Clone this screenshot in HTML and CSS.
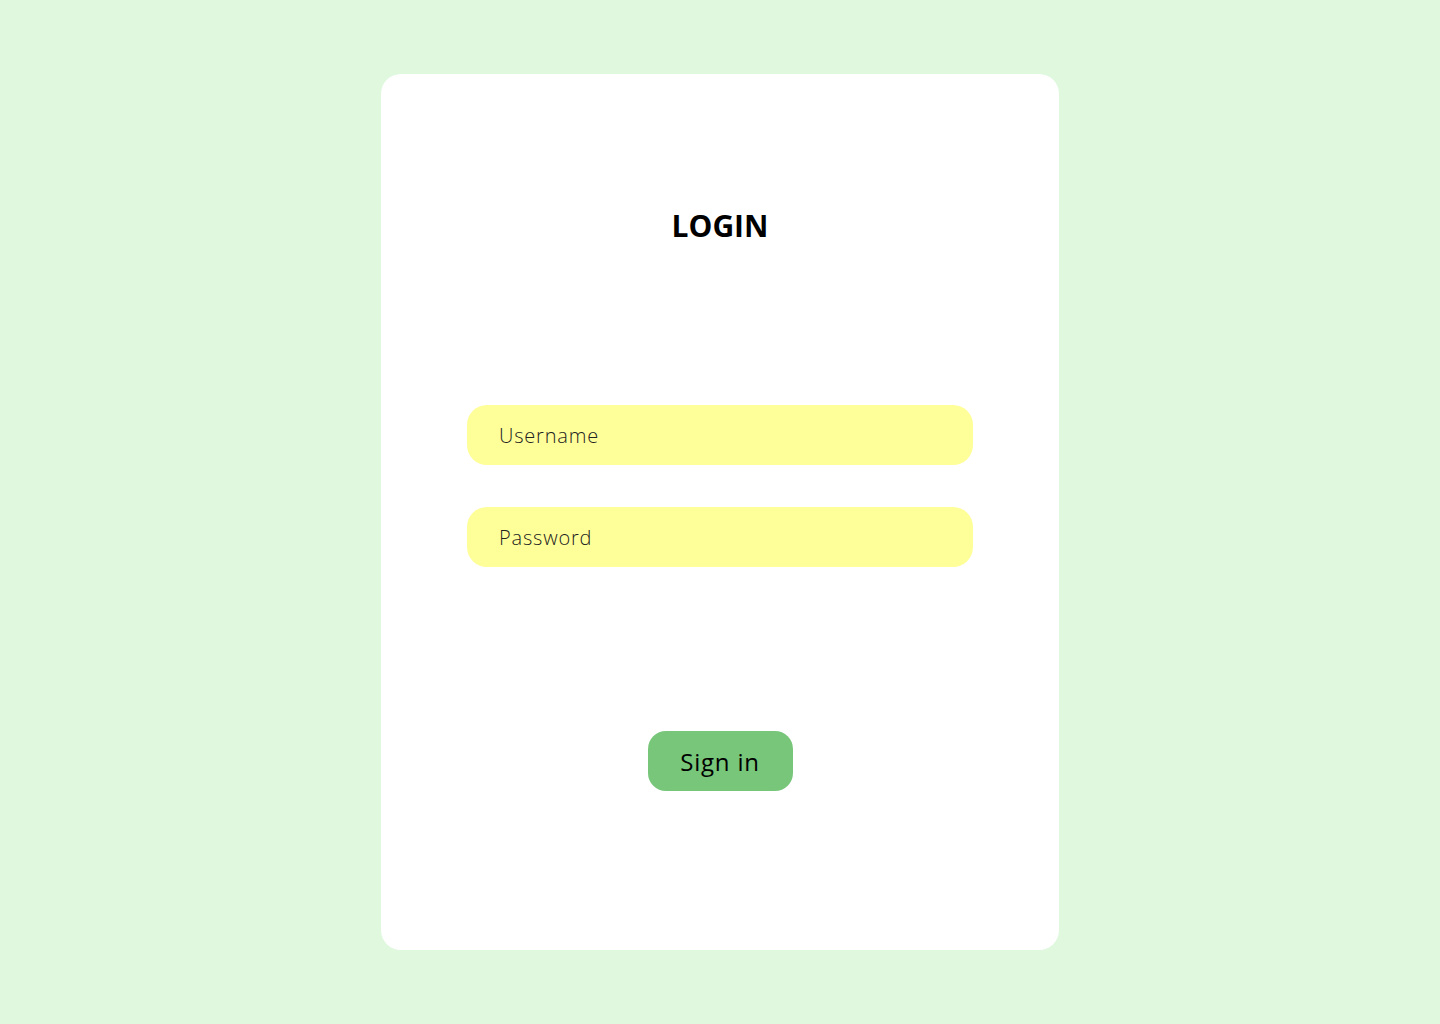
FILE: index.html
```html
<!DOCTYPE html>
<html lang="en">
<head>
<meta charset="utf-8">
<title>Login</title>
<link rel="stylesheet" href="styles.css">
</head>
<body>
<main class="page">
  <form class="card">
    <h1 class="title">LOGIN</h1>
    <div class="fields">
      <input class="field" type="text" placeholder="Username">
      <input class="field" type="password" placeholder="Password">
    </div>
    <button class="btn" type="button">Sign in</button>
  </form>
</main>
</body>
</html>
```
FILE: styles.css
```css
* { box-sizing: border-box; }
html, body { margin: 0; padding: 0; }
body {
  background: #dff8de;
  font-family: "Open Sans", "Noto Sans", sans-serif;
  color: #000;
}
.page {
  height: 1024px;
  display: flex;
  align-items: center;
  justify-content: center;
}
.card {
  width: 678px;
  height: 876px;
  background: #fff;
  border-radius: 20px;
  display: flex;
  flex-direction: column;
  align-items: center;
  padding-top: 130px;
}
.title {
  margin: 0;
  font-size: 30px;
  line-height: 44px;
  font-weight: 700;
  letter-spacing: 0;
}
.fields {
  margin-top: 157px;
  display: flex;
  flex-direction: column;
  gap: 42px;
}
.field {
  width: 506px;
  height: 60px;
  border: none;
  outline: none;
  border-radius: 20px;
  background: #ffff99;
  padding: 0 32px;
  font-family: inherit;
  font-size: 20px;
  font-weight: 300;
  letter-spacing: 0.8px;
  color: #222;
}
.field::placeholder { color: #222; opacity: 1; }
.btn {
  margin-top: 164px;
  width: 145px;
  height: 60px;
  border: none;
  border-radius: 18px;
  background: #77c67a;
  font-family: inherit;
  font-size: 24px;
  font-weight: 400;
  letter-spacing: 0.8px;
  color: #000;
  padding: 0;
}
```
